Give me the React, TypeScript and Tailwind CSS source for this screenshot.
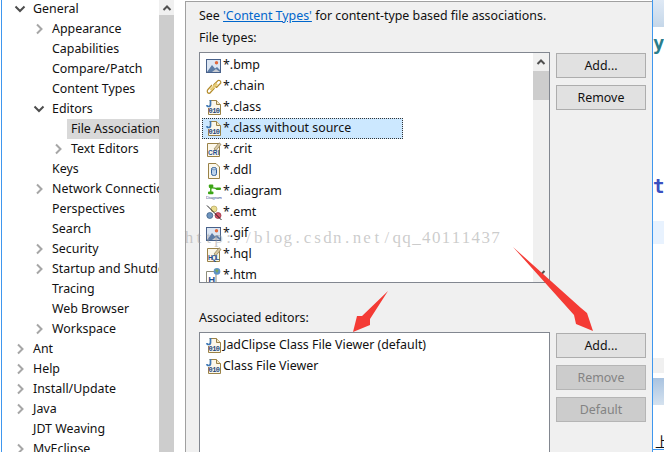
import React from "react";

const font = { fontFamily: '"Noto Sans", "Open Sans", sans-serif' };

function Chev({ open }: { open?: boolean }) {
  return (
    <svg width="14" height="14" viewBox="0 0 14 14" fill="none">
      {open ? (
        <path d="M2.5 4.5 L7 9 L11.5 4.5" stroke="#4d4d4d" strokeWidth="2" />
      ) : (
        <path d="M5 2.5 L9.5 7 L5 11.5" stroke="#a6a6a6" strokeWidth="2" />
      )}
    </svg>
  );
}

const tree: { t: string; d: 0 | 1 | 2; c?: "o" | "c"; sel?: boolean }[] = [
  { t: "General", d: 0, c: "o" },
  { t: "Appearance", d: 1, c: "c" },
  { t: "Capabilities", d: 1 },
  { t: "Compare/Patch", d: 1 },
  { t: "Content Types", d: 1 },
  { t: "Editors", d: 1, c: "o" },
  { t: "File Associations", d: 2, sel: true },
  { t: "Text Editors", d: 2, c: "c" },
  { t: "Keys", d: 1 },
  { t: "Network Connections", d: 1, c: "c" },
  { t: "Perspectives", d: 1 },
  { t: "Search", d: 1 },
  { t: "Security", d: 1, c: "c" },
  { t: "Startup and Shutdown", d: 1, c: "c" },
  { t: "Tracing", d: 1 },
  { t: "Web Browser", d: 1 },
  { t: "Workspace", d: 1, c: "c" },
  { t: "Ant", d: 0, c: "c" },
  { t: "Help", d: 0, c: "c" },
  { t: "Install/Update", d: 0, c: "c" },
  { t: "Java", d: 0, c: "c" },
  { t: "JDT Weaving", d: 0 },
  { t: "MyEclipse", d: 0, c: "c" },
];

function ClassIcon() {
  return (
    <svg width="16" height="16" viewBox="0 0 16 16">
      <path d="M3.5 0.5 H10.5 L14.5 4.5 V14.5 H2.5 V8" fill="#fbf7ea" stroke="#9a8247" />
      <path d="M10.5 0.5 V4.5 H14.5" fill="#f1e6c4" stroke="#9a8247" />
      <path d="M4.5 0 V4.5 Q4.5 6.5 2.5 6.5 Q0.8 6.5 1 5" fill="none" stroke="#3f78b5" strokeWidth="1.7" />
      <text x="2.6" y="13.4" fontSize="7" fontWeight="700" fill="#24477c" fontFamily='"Liberation Mono", monospace' textLength="11.4">010</text>
    </svg>
  );
}

function BmpIcon() {
  return (
    <svg width="16" height="16" viewBox="0 0 16 16">
      <rect x="0.5" y="1.5" width="14" height="13" fill="#dce6f3" stroke="#48618a" />
      <circle cx="10.5" cy="4.8" r="1.7" fill="#e2683c" />
      <path d="M1 14 L6 7 L9 10.5 L11 9 L14 12 V14 Z" fill="#5d7ca6" />
      <path d="M6 14 L10 11 L14 14 Z" fill="#c9ccd2" />
    </svg>
  );
}

function ChainIcon() {
  return (
    <svg width="16" height="16" viewBox="0 0 16 16" fill="none">
      <path d="M1.5 11 L6 6 M3.5 14.5 L8.5 9 M1.5 11 Q0.5 14 3.5 14.5" stroke="#b48c2c" strokeWidth="1.2" />
      <path d="M7.5 6 L12 1.5 Q15 1 14.8 4 L10.5 8.5 M7.5 6 L10.5 8.5" stroke="#b48c2c" strokeWidth="1.2" />
      <path d="M4.5 11 L11 4.5" stroke="#e8cc72" strokeWidth="2.4" />
    </svg>
  );
}

function NoteIcon({ label }: { label: string }) {
  return (
    <svg width="16" height="16" viewBox="0 0 16 16">
      <path d="M1.5 1.5 H13.5 V14.5 H1.5 Z" fill="#fbf7ea" stroke="#9a8247" />
      <path d="M8 7 L13 0.8 L15 2.4 L10 8.5 Z" fill="#d9c9a0" stroke="#8b7a58" strokeWidth="0.7" />
      <text x="2" y="13.3" fontSize="6.5" fontWeight="700" fill="#1f4f8f" fontFamily='"Liberation Sans", sans-serif' textLength="11.5">{label}</text>
    </svg>
  );
}

function DdlIcon() {
  return (
    <svg width="16" height="16" viewBox="0 0 16 16">
      <path d="M2.5 0.5 H10 L13.5 4 V15.5 H2.5 Z" fill="#fbf7ea" stroke="#9a8247" />
      <rect x="5.5" y="4.5" width="5" height="8" rx="2" fill="#bcd3ec" stroke="#2f5f9a" />
      <ellipse cx="8" cy="5.8" rx="2" ry="1" fill="#e8f0fa" stroke="#2f5f9a" strokeWidth="0.6" />
    </svg>
  );
}

function DiagramIcon() {
  return (
    <svg width="16" height="16" viewBox="0 0 16 16">
      <rect x="2.8" y="0.5" width="4.5" height="3.5" rx="1" fill="#3ca516" />
      <rect x="10" y="3.5" width="5" height="2.5" rx="1" fill="#3ca516" />
      <rect x="2" y="7.5" width="5.5" height="2.8" rx="1" fill="#3ca516" />
      <path d="M4.8 3 V8 M5 4 Q8 3.5 11 5" stroke="#3ca516" strokeWidth="1.4" fill="none" />
      <text x="0" y="14.5" fontSize="4.4" fill="#3a4c8c" fontFamily='"Liberation Sans", sans-serif' textLength="16">Diagram</text>
    </svg>
  );
}

function EmtIcon() {
  return (
    <svg width="16" height="16" viewBox="0 0 16 16">
      <circle cx="8" cy="4" r="3" fill="#e9dc8f" stroke="#b5a55f" strokeWidth="0.7" />
      <circle cx="3.8" cy="10.5" r="3" fill="#6d93bd" stroke="#35577f" strokeWidth="0.7" />
      <circle cx="12" cy="10.5" r="3" fill="#d5566a" stroke="#8f2a3c" strokeWidth="0.7" />
      <path d="M1 0.5 L15.5 15" stroke="#111" strokeWidth="0.9" />
    </svg>
  );
}

function HtmIcon() {
  return (
    <svg width="16" height="16" viewBox="0 0 16 16">
      <path d="M0.5 3.5 H10 V15.5 H0.5 Z" fill="#fff" stroke="#8d8d7a" />
      <text x="2.2" y="14.5" fontSize="9.5" fontWeight="700" fill="#1f4f8f" fontFamily='"Liberation Sans", sans-serif'>H</text>
      <circle cx="11" cy="3.4" r="3.3" fill="#5c93c7" />
      <path d="M9 2 Q11 0.5 12.5 2.5 L11 5 Z" fill="#79a85a" />
    </svg>
  );
}

const files: { t: string; i: React.ReactNode; sel?: boolean }[] = [
  { t: "*.bmp", i: <BmpIcon /> },
  { t: "*.chain", i: <ChainIcon /> },
  { t: "*.class", i: <ClassIcon /> },
  { t: "*.class without source", i: <ClassIcon />, sel: true },
  { t: "*.crit", i: <NoteIcon label="CRI" /> },
  { t: "*.ddl", i: <DdlIcon /> },
  { t: "*.diagram", i: <DiagramIcon /> },
  { t: "*.emt", i: <EmtIcon /> },
  { t: "*.gif", i: <BmpIcon /> },
  { t: "*.hql", i: <NoteIcon label="HQL" /> },
  { t: "*.htm", i: <HtmIcon /> },
];

function Btn({ children, disabled }: { children: React.ReactNode; disabled?: boolean }) {
  return (
    <div
      className={
        disabled
          ? "h-[25px] w-[90px] pt-px flex items-center justify-center border border-[#b5b5b5] bg-[#cccccc] text-[#838383]"
          : "h-[25px] w-[90px] pt-px flex items-center justify-center border border-[#adadad] bg-[#e1e1e1] text-[#111]"
      }
    >
      {children}
    </div>
  );
}

const mark = "http://blog.csdn.net/qq_40111437".split("");

export default function App() {
  return (
    <div className="relative flex w-[664px] h-[452px] overflow-hidden bg-white text-[12.4px] text-[#111]" style={font}>
      {/* window edge */}
      <div className="w-[2px] h-full flex justify-end">
        <div className="w-px h-full bg-[#3f97ee]" />
      </div>

      {/* tree */}
      <div className="w-[157px] h-full overflow-hidden">
        <div className="-mt-px">
          {tree.map((r) => (
            <div
              key={r.t}
              className={
                r.d === 0
                  ? "h-5 flex items-center pl-[11px] whitespace-nowrap"
                  : r.d === 1
                    ? "h-5 flex items-center pl-[30px] whitespace-nowrap"
                    : "h-5 flex items-center pl-[49px] whitespace-nowrap"
              }
            >
              <div className="w-[14px] h-[14px] shrink-0 mr-[2px]">
                {r.c === "o" && <Chev open />}
                {r.c === "c" && <Chev />}
              </div>
              <div className={r.sel ? "h-5 flex-1 flex items-center pl-1 bg-[#d9d9d9] overflow-hidden" : "h-5 flex-1 flex items-center pl-1 overflow-hidden"}>
                {r.t}
              </div>
            </div>
          ))}
        </div>
      </div>

      {/* tree scrollbar */}
      <div className="w-[15px] h-full flex flex-col bg-[#f0f0f0]">
        <div className="h-[15px] flex items-center justify-center">
          <svg width="10" height="8" viewBox="0 0 10 8" fill="none">
            <path d="M1.5 6 L5 2.5 L8.5 6" stroke="#505050" strokeWidth="2" />
          </svg>
        </div>
        <div className="flex-1 bg-[#cdcdcd]" />
      </div>

      <div className="w-[11px] h-full bg-white" />

      {/* main panel */}
      <div className="w-[467px] mt-px h-[452px] border-l border-t border-[#a0a0a0] bg-[#f0f0f0] pl-[13px] pr-[6px] flex flex-col">
        <div className="shrink-0 h-[28px] pt-px flex items-center whitespace-nowrap">
          See&nbsp;<span className="text-[#0066cc] underline">'Content Types'</span>&nbsp;for content-type based file associations.
        </div>
        <div className="shrink-0 h-4 pt-px flex items-center">File types:</div>
        <div className="shrink-0 flex mt-[6px] gap-[6px]">
          <div className="w-[351px] h-[231px] border border-[#828790] bg-white flex overflow-hidden">
            <div className="flex-1 pt-[2px] pl-[2px] overflow-hidden">
              {files.map((f) => (
                <div
                  key={f.t}
                  className={
                    f.sel
                      ? "h-[21px] w-[201px] flex items-center pl-[4px] bg-[#cce8ff] outline-1 outline-dotted outline-[#333] -outline-offset-1 whitespace-nowrap"
                      : "h-[21px] flex items-center pl-[4px] whitespace-nowrap"
                  }
                >
                  <div className="w-4 h-4 shrink-0">{f.i}</div>
                  <span className="ml-px">{f.t}</span>
                </div>
              ))}
            </div>
            <div className="w-4 h-full bg-[#f0f0f0] flex flex-col items-center">
              <div className="h-[18px] flex items-center justify-center">
                <svg width="10" height="8" viewBox="0 0 10 8" fill="none">
                  <path d="M1.5 6 L5 2.5 L8.5 6" stroke="#505050" strokeWidth="2" />
                </svg>
              </div>
              <div className="w-full h-[29px] bg-[#cdcdcd]" />
              <div className="flex-1" />
              <div className="h-[18px] flex items-center justify-center">
                <svg width="10" height="8" viewBox="0 0 10 8" fill="none">
                  <path d="M1.5 2 L5 5.5 L8.5 2" stroke="#505050" strokeWidth="2" />
                </svg>
              </div>
            </div>
          </div>
          <div className="flex flex-col gap-[7px] mt-px">
            <Btn>Add...</Btn>
            <Btn>Remove</Btn>
          </div>
        </div>
        <div className="shrink-0 h-4 pt-px mt-[27px] flex items-center">Associated editors:</div>
        <div className="shrink-0 flex mt-[6px] gap-[6px]">
          <div className="w-[351px] h-[130px] border border-[#828790] bg-white pt-[2px] pl-[6px]">
            <div className="h-[21px] flex items-center whitespace-nowrap"><div className="w-4 h-4 shrink-0"><ClassIcon /></div><span className="ml-px">JadClipse Class File Viewer (default)</span></div>
            <div className="h-[21px] flex items-center whitespace-nowrap"><div className="w-4 h-4 shrink-0"><ClassIcon /></div><span className="ml-px">Class File Viewer</span></div>
          </div>
          <div className="flex flex-col gap-[7px] mt-px">
            <Btn>Add...</Btn>
            <Btn disabled>Remove</Btn>
            <Btn disabled>Default</Btn>
          </div>
        </div>
      </div>

      {/* right strip: the neighbouring window */}
      <div className="w-px h-full bg-[#3f97ee]" />
      <div className="flex-1 h-full flex flex-col overflow-hidden bg-white">
        <div className="shrink-0 h-[27px] bg-gradient-to-b from-[#dfe9f5] to-[#c5d7e9]" />
        <div className="shrink-0 h-[151px] pt-[6px] text-[19px] leading-[20px] font-bold text-[#2a7d8c]" style={{ fontFamily: '"DejaVu Sans Mono", monospace' }}>y</div>
        <div className="shrink-0 h-[43px] text-[19px] leading-[17px] font-bold text-[#3a50c0]" style={{ fontFamily: '"DejaVu Sans Mono", monospace' }}>t</div>
        <div className="shrink-0 h-[23px] bg-[#e8f2fe]" />
        <div className="shrink-0 h-[114px]" />
        <div className="shrink-0 h-[15px] bg-[#f0f0f0]" />
        <div className="shrink-0 h-[5px]" />
        <div className="shrink-0 h-[27px] bg-gradient-to-b from-[#a9c3e0] to-[#d5e2ef]" />
        <div className="shrink-0 h-[45px] pt-[28px] pl-[2px] text-[14px] leading-[17px] border-b border-[#3f97ee]" style={{ fontFamily: '"Noto Sans CJK SC", sans-serif' }}>上</div>
      </div>

      {/* watermark */}
      <div
        className="absolute left-[184px] top-[227px] flex text-[17px] leading-[22px] text-[#9a9a9a]/50 pointer-events-none"
        style={{ fontFamily: '"Liberation Serif", serif' }}
      >
        {mark.map((c, i) => (
          <span key={i} className="w-[9.9px] text-center inline-block">{c}</span>
        ))}
      </div>

      {/* annotation arrows */}
      <svg className="absolute left-0 top-0 pointer-events-none" width="664" height="452" viewBox="0 0 664 452">
        <polygon points="388,291 370,319 370,325 353,332 357,316 362,316" fill="#f43b35" />
        <polygon points="513,247 581,308 587,313 593,331 576,324 574,315" fill="#f43b35" />
      </svg>
    </div>
  );
}
